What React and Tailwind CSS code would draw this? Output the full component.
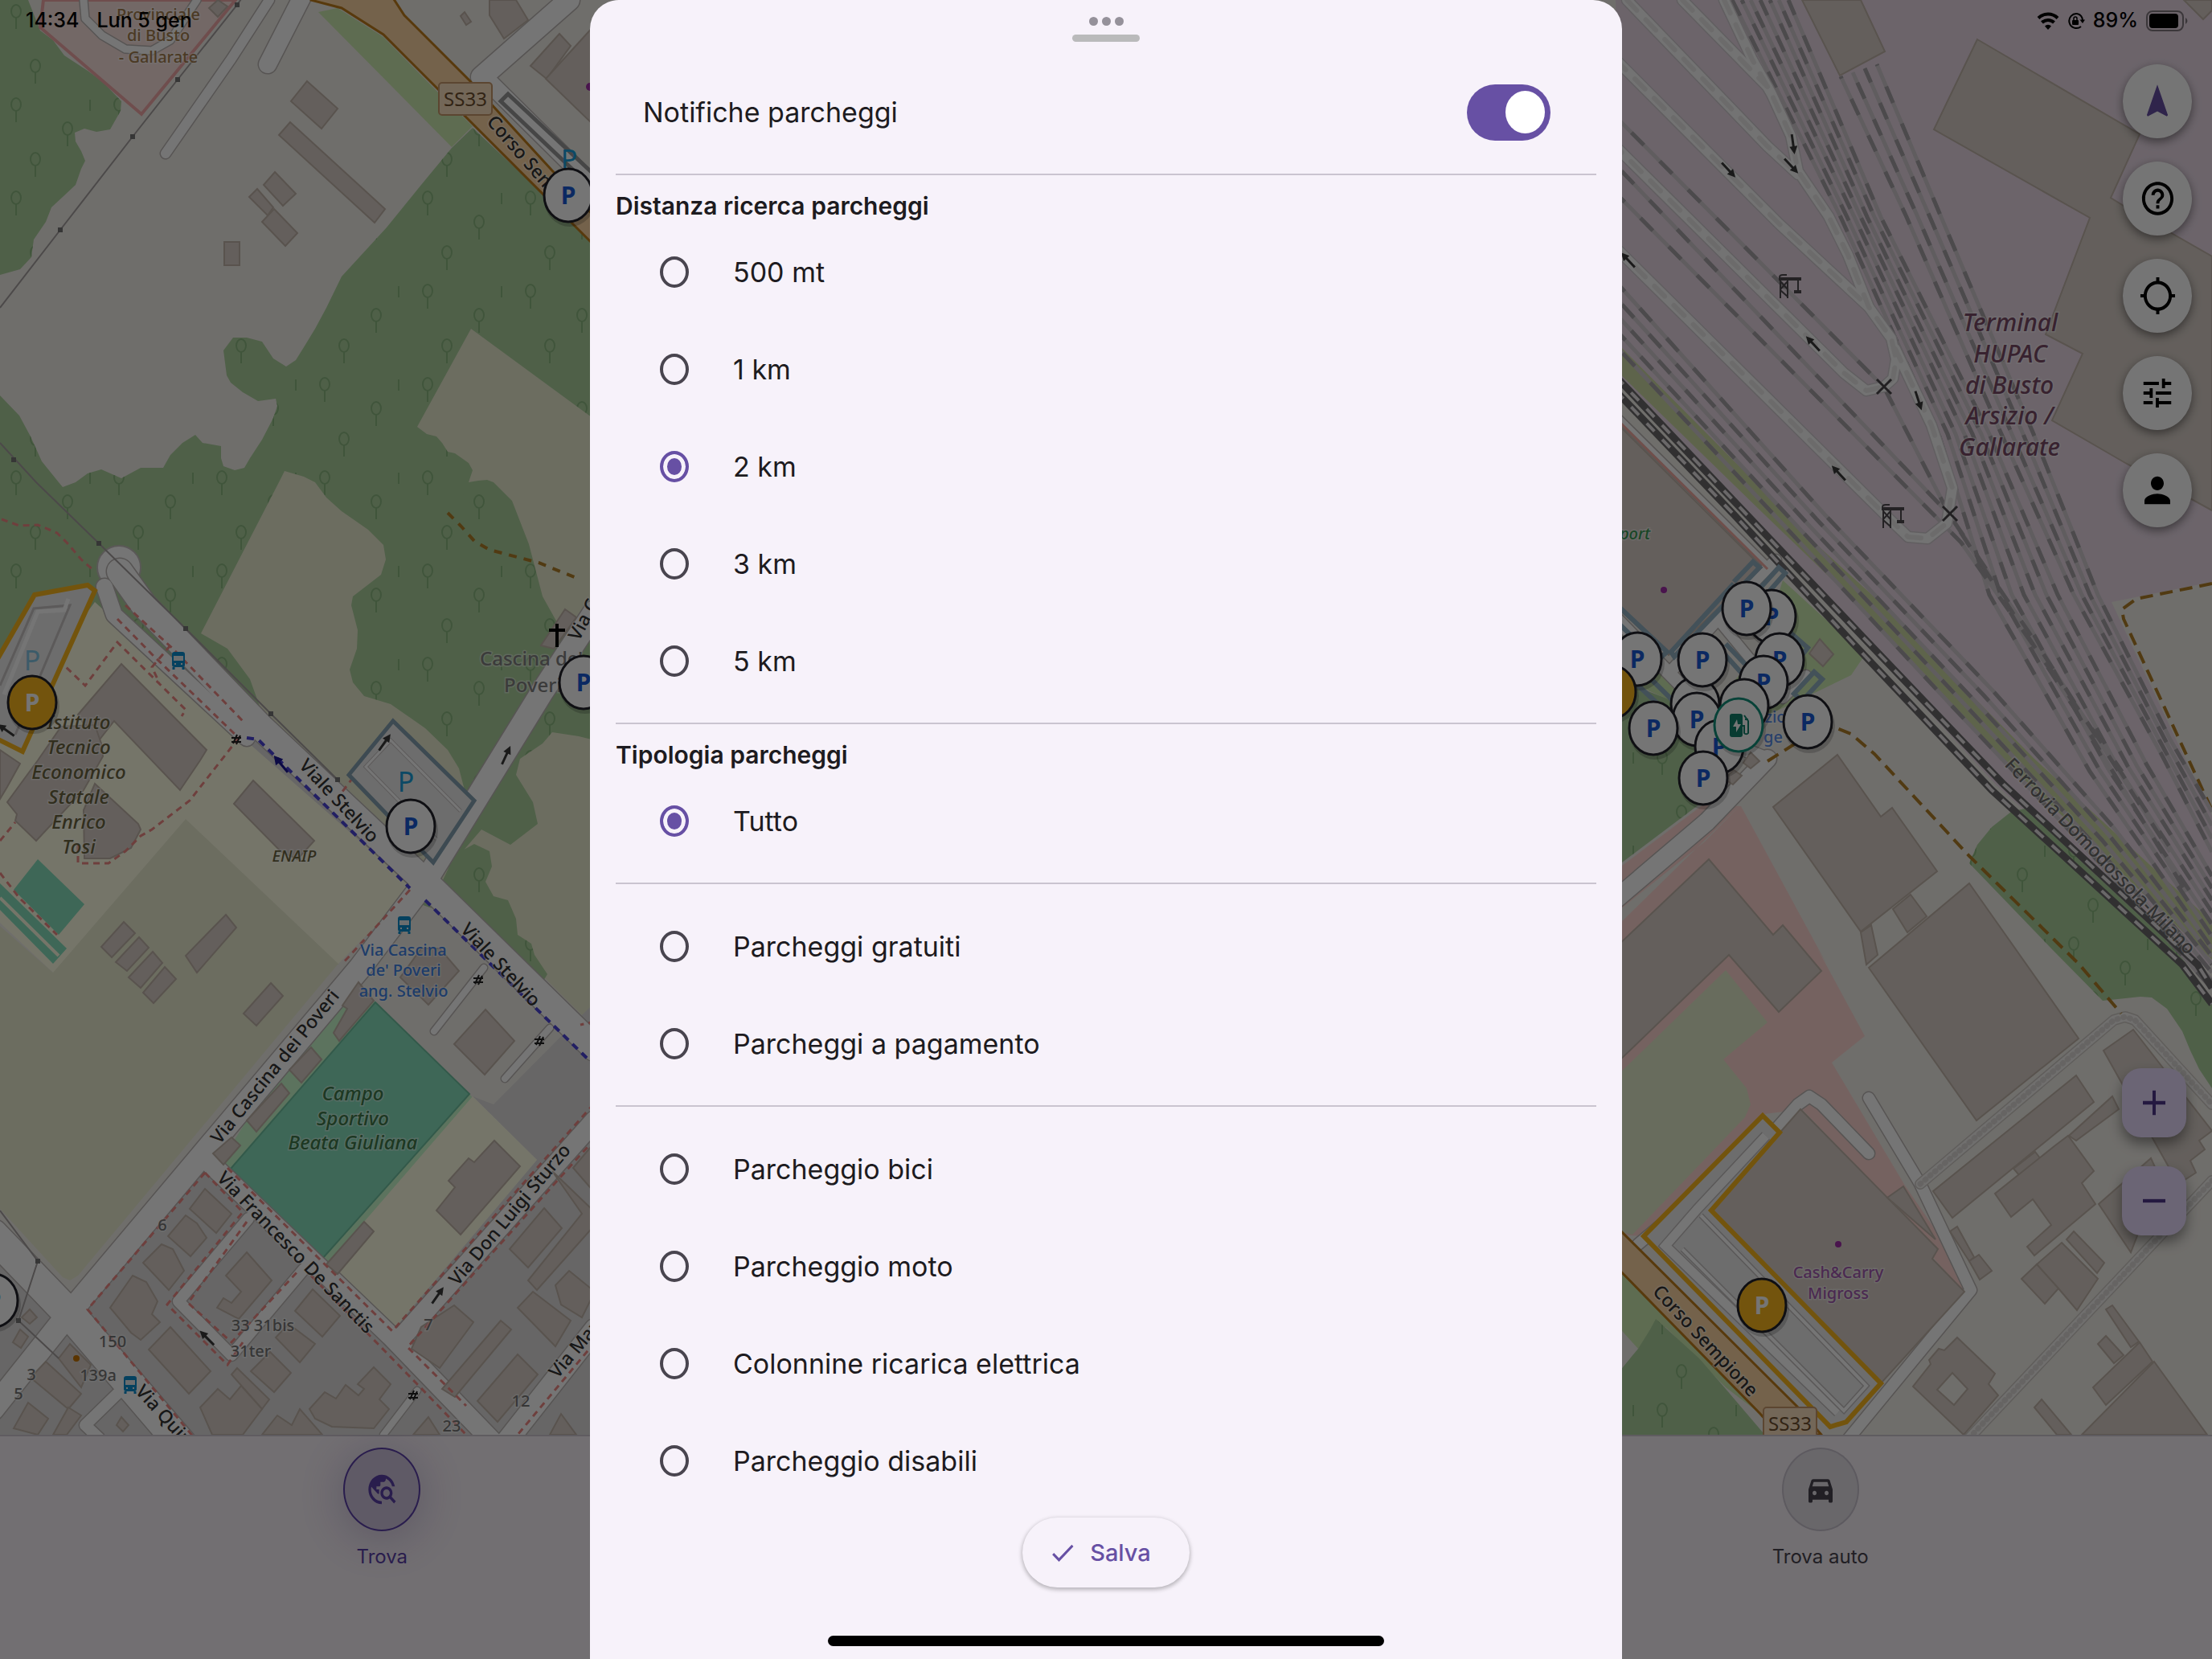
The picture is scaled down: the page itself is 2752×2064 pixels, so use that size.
import React, { useState } from "react";
import {
  MdNavigation,
  MdHelpOutline,
  MdLocationSearching,
  MdTune,
  MdPerson,
  MdAdd,
  MdRemove,
  MdCheck,
  MdTravelExplore,
  MdDirectionsCarFilled,
} from "react-icons/md";

/* ---------- map data: every tile keeps its vertices on its own 1568-unit grid ---------- */

const GRID = 1568;
const TILES = {
  A: [0, 0, 740, 600],
  B: [0, 600, 740, 600],
  C: [0, 1180, 740, 620],
  D: [2010, 0, 742, 680],
  E: [2010, 640, 742, 560],
  F: [2010, 1180, 742, 620],
};

function project(tile, x, y) {
  const [ox, oy, w, h] = TILES[tile];
  return [Math.round(ox + (x * w) / GRID), Math.round(oy + (y * h) / GRID)];
}

/* "A 10,20 30,40 B 5,5" -> projected point list; a letter switches the tile */
function points(src) {
  let tile = "A";
  const out = [];
  for (const token of src.trim().split(/\s+/)) {
    if (TILES[token]) tile = token;
    else {
      const [x, y] = token.split(",").map(Number);
      out.push(project(tile, x, y).join(","));
    }
  }
  return out.join(" ");
}

const LAND = "#f2efe9";
const FOREST = "#add19e";
const FARM = "#ebedd2";
const SCHOOL = "#ffffe5";
const RESIDENTIAL = "#e0dfdf";
const INDUSTRIAL = "#ebdbe8";
const RETAIL = "#ffd6d1";
const GRASS = "#cdebb0";
const PITCH = "#88e0be";

const AREAS = [
  [FOREST, "A 0,0 75,0 105,100 140,130 170,180 230,230 270,265 320,330 318,360 290,420 255,428 222,418 198,432 200,460 215,490 224,522 215,550 200,600 165,640 135,675 120,720 90,780 82,835 52,875 0,893"],
  [GRASS, "A 840,40 890,25 1010,120 1155,300 1245,410 1190,478"],
  [FOREST, "A 1245,415 1190,480 1110,600 1020,740 900,900 860,1000 830,1070 800,1130 780,1170 755,1192 720,1165 690,1110 650,1098 615,1098 588,1140 598,1220 608,1245 640,1275 680,1305 727,1297 730,1320 720,1360 690,1430 660,1490 645,1520 618,1530 590,1515 582,1490 582,1450 535,1440 515,1415 480,1440 450,1480 430,1520 370,1522 320,1555 268,1525 230,1540 200,1568 B 165,15 A 155,1568 110,1500 80,1420 50,1350 0,1285 B 0,900 1568,1568 A 1568,790"],
  [FARM, "A 1242,1070 1100,1388 1125,1412 1150,1420 1165,1440 1180,1468 1200,1475 1235,1505 1246,1530 1235,1568 B 1300,0 1350,60 1395,200 1430,370 1470,460 1568,420 A 1568,1365"],
  [FOREST, "A 1235,1568 1260,1562 1285,1560 B 1300,0 1275,30 1265,75 1245,78 1215,30"],
  [FARM, "B 530,490 735,0 A 750,1532 800,1550 B 830,0 860,50 900,95 970,155 1010,205 1018,250 1005,300 930,370 925,400 942,480 940,540 922,610 930,650 960,695 1030,720 1120,800 1180,870 1210,930 1225,1000 1245,1100 1120,1250 700,780 660,640 600,540"],
  [FARM, "B 1568,840 1525,825 1455,812 1430,850 1370,900 1360,950 1405,1040 1418,1110 1345,1178 1270,1130 1150,1300 1400,1568 C 1568,250 B 1568,1568"],
  [FOREST, "B 1165,1300 1200,1210 1250,1175 1290,1200 1297,1250 1280,1300 1300,1345 1340,1360 1360,1420 1365,1470 1400,1500 C 1410,20 1443,80 1430,105 1400,100 1300,0"],
  [SCHOOL, "B 250,390 1090,1320 890,1568 C 140,75 0,-80 B 0,800"],
  [FARM, "B 490,1095 895,1568 C 890,50 205,1030 185,1045 165,1035 0,820 0,-70 140,75"],
  [RESIDENTIAL, "B 660,780 1120,1310 1100,1330 640,830"],
  [RESIDENTIAL, "C 0,900 185,1110 530,695 608,692 850,975 1035,1205 1415,665 1245,465 1300,490 1568,170 1568,1568 0,1568"],
  ["#c8facc", "C 945,105 990,170 608,692 585,665 650,540 800,310"],
  ["#c8facc", "C 1237,458 1250,475 890,1025 850,975"],
  [SCHOOL, "C 1245,465 1415,665 1035,1205 890,1025 960,860"],
  [INDUSTRIAL, "D 0,0 1568,0 E 1568,235 1303,305 1568,1050 1568,1568 1520,1568 1000,940 650,440 335,0 D 16,1100"],
  ["#cdd9a4", "D 0,980 535,1568 E 700,310 1100,850 1568,1420 1568,1550 1040,880 620,290 390,0 D 0,1060"],
  [GRASS, "E 440,230 655,490 620,560 540,610 400,700 200,650 16,400 16,570 230,700 380,480"],
  [FOREST, "E 0,570 150,650 260,880 230,1000 0,1230"],
  [RETAIL, "E 0,1240 230,1010 330,1015 555,1568 F 530,0 655,275 568,360 760,745 850,900 918,1080 840,980 715,785 490,505 390,520 75,905 0,900"],
  [LAND, "E 235,1140 330,1010 0,1440 0,1390"],
  [FOREST, "E 1075,1025 F 1470,0 1568,160 1568,440 1535,380 1510,320 1490,260 1450,190 1410,155 1380,152 1280,165 1145,0 E 930,1215 950,1150 990,1090 1040,1035"],
  ["#e3ebca", "F 290,68 400,232 283,348 345,440 355,490 340,530 45,900 0,890 0,405"],
  [GRASS, "F 0,1000 380,1465 290,1380 130,1190 60,1260 0,1180"],
  [FOREST, "F 105,1165 220,1290 290,1385 400,1540 0,1540 0,1345 60,1260 90,1200"],
];

const BUILDINGS = [
  "A 810,263 890,352 848,418 768,328",
  "A 765,397 1015,680 987,723 735,440",
  "A 725,560 780,630 745,670 694,600",
  "A 677,613 720,675 705,700 656,640",
  "A 722,680 783,757 752,800 690,720",
  "A 591,787 631,787 631,863 591,863",
  "A 1475,110 1505,150 1440,255 1398,213",
  "A 1568,80 1438,255 1568,410",
  "A 1290,0 1360,0 1393,65 1328,125 1290,50",
  "A 1225,38 1242,70 1230,80 1214,52",
  "A 575,0 600,20 575,55 550,25",
  "B 205,755 320,590 545,870 528,905 475,1000 300,775 255,850",
  "B 160,795 250,790 268,850 272,890 220,1000 95,1165 40,1100 45,1080 20,1040 100,905",
  "B 220,1065 250,980 365,1110 370,1130 345,1190 290,1222 222,1222",
  "B 668,970 828,1165 785,1225 740,1200 617,1045",
  "B 0,870 52,915 20,990 0,1030",
  "B 327,1430 355,1465 295,1545 268,1510",
  "B 367,1480 392,1512 335,1590 305,1560",
  "B 595,1407 623,1447 520,1595 490,1540",
  "B 1490,412 1520,440 1460,540 1425,530",
  "C 403,10 428,45 370,123 340,90",
  "C 435,57 465,95 405,172 377,138",
  "C 715,110 745,150 675,243 642,205",
  "C 1110,0 1160,0 1210,70 1130,178 1055,90",
  "C 1280,192 1357,290 1277,397 1198,300",
  "C 945,105 985,165 895,290 880,265 915,190 903,180",
  "C 820,310 848,348 795,422 762,382",
  "C 742,425 762,455 675,577 650,540",
  "C 610,595 633,620 590,680 562,645",
  "C 1303,605 1370,685 1215,900 1150,825 1200,750 1183,730 1235,660 1250,672",
  "C 960,860 985,890 890,1025 860,995",
  "C 540,755 610,835 570,895 500,820",
  "C 490,840 520,865 545,910 503,968 443,905",
  "C 425,930 455,945 485,1015 445,1075 377,990",
  "C 350,1030 385,1050 415,1110 400,1150 422,1175 370,1232 345,1210 290,1130",
  "C 450,1192 555,1330 497,1402 393,1262",
  "C 650,955 717,1045 630,1165 572,1130 590,1100 610,1115 635,1080 595,1030",
  "C 825,1072 897,1155 850,1222 778,1140",
  "C 760,1180 830,1245 790,1303 727,1225",
  "C 712,1270 768,1335 722,1397 662,1330",
  "C 625,1320 710,1420 690,1450 610,1340",
  "C 575,1385 605,1420 635,1375 690,1450 640,1530 560,1530 528,1445",
  "C 730,1470 770,1500 790,1450 850,1530 690,1530",
  "C 815,1450 855,1395 885,1415 912,1372 945,1405 960,1385 943,1370 985,1318 1030,1370 1000,1420 1025,1450 985,1510 875,1505 830,1480",
  "C 120,1300 213,1400 180,1450 80,1350",
  "C 185,1245 240,1310 215,1380 155,1290",
  "C 75,1430 128,1480 100,1530 35,1510",
  "C 180,1445 213,1470 175,1530 140,1530",
  "C 78,1135 98,1160 78,1182 58,1160",
  "C 52,1198 75,1222 55,1258 33,1238",
  "C 320,1475 340,1500 325,1520 308,1500",
  "C 1435,818 1482,880 1393,1005 1343,945",
  "C 1455,700 1568,830 1568,870 1415,1075 1393,1045 1535,835",
  "C 1568,610 1510,690 1568,770",
  "C 1500,1013 1568,1080 1535,1160 1480,1120 1465,1060",
  "C 1405,1080 1505,1170 1465,1253 1365,1130",
  "C 1198,1122 1247,1175 1160,1320 1085,1260 1110,1190",
  "C 1320,1170 1348,1200 1200,1410 1165,1385",
  "C 1365,1277 1418,1340 1312,1490 1258,1425",
  "C 1130,1475 1160,1530 1090,1530",
  "C 1480,1465 1520,1530 1450,1530",
  "D 490,0 645,0 707,147 590,217",
  "D 950,112 1378,385 1302,568 1335,590 1568,735 1568,1465 1345,1330 1148,1205 1228,1015 1130,960 1247,625 837,372",
  "D 1495,0 1568,0 1568,30 1545,55",
  "D 0,1210 330,1568 E 385,185 140,490 0,320",
  "E 583,838 697,1053 727,1022 845,1243 645,1453 415,1018",
  "E 775,1325 818,1400 768,1455 730,1375",
  "E 645,1455 672,1430 688,1535 660,1568",
  "E 930,1285 F 1217,282 948,542 665,60",
  "E 537,435 573,487 545,530 510,485",
  "E 355,830 378,860 355,885 335,865",
  "E 310,890 332,910 308,940 285,920",
  "E 0,1510 245,1200 415,1465 440,1432 F 540,72 428,200 298,20 0,365",
  "F 485,505 847,945 833,975 918,1080 697,1368 252,825",
  "F 757,748 840,915 715,785",
  "F 1210,400 1257,482 885,848 835,765",
  "F 1307,465 1322,505 1210,605 1192,590",
  "F 1103,640 1118,662 1062,715 1047,693",
  "F 1155,620 1190,590 1257,700 1225,738 1262,805 1100,965 1083,938 1145,870 1097,790 1040,845 998,772",
  "F 1270,805 1408,660 1430,720 1355,955",
  "F 1360,255 1568,575 1535,605 1548,632 1510,668 1525,705 1480,740 1282,320",
  "F 898,875 942,970 930,985 880,890",
  "F 955,963 988,1015 957,1042 930,985",
  "F 1205,890 1285,990 1265,1022 1185,915",
  "F 1172,925 1268,1040 1212,1138 1165,1070 1108,995",
  "F 1108,993 1165,1070 1128,1118 1068,1040",
  "F 898,1225 998,1338 980,1370 1005,1405 915,1530 782,1378 828,1308 825,1295 850,1260 865,1265",
  "F 1305,1122 1375,1237 1355,1255 1290,1135",
  "F 1290,1218 1335,1280 1310,1305 1268,1245",
  "F 1378,1238 1412,1300 1290,1437 1255,1380",
  "F 1415,1300 1555,1530 1225,1530",
  "F 1120,1420 1198,1530 1160,1530 1100,1445",
];

/* [width, path] */
const ROADS = [
  [9, "A 220,0 225,60 270,115 330,160 400,165 450,130 520,0"],
  [12, "A 710,0 610,190 437,500"],
  [22, "A 800,-20 705,210"],
  [26, "A 1500,0 1270,250"],
  [22, "A 1290,270 1568,610"],
  [32, "B 315,290 380,400 690,800 1120,1300 1568,1840"],
  [20, "B 275,340 300,430 650,830"],
  [28, "B 1568,420 1430,680 1120,1300 C 950,60 540,640 180,1150 -20,1450"],
  [24, "C 540,660 1030,1220 1330,1590"],
  [24, "C 1050,1235 1568,540"],
  [38, "C -20,900 200,1170 500,1590"],
  [26, "C 1310,1590 1568,1200"],
  [14, "C 655,850 470,1110 610,1280 800,1010"],
  [14, "C 310,1400 225,1500 260,1540"],
  [8, "C 1275,60 1145,260"],
  [8, "C 1450,250 1330,410"],
  [8, "C 1100,1390 1010,1530"],
  [22, "E 0,1340 240,1070 400,850"],
  [16, "E 0,360 130,540 340,820 400,850"],
  [14, "E 145,545 300,320 420,160"],
  [12, "E 270,370 440,640 500,560"],
  [8, "D 0,1190 E 250,-20 400,180"],
  [14, "F 60,930 F 430,560 480,490 510,465 540,490 665,645"],
  [14, "F 665,470 800,740 935,1075 600,1560"],
];

const SERVICE = [
  "D 30,0 400,420 480,500",
  "D 175,0 400,250",
  "D 0,170 430,640 665,880",
  "D 285,0 360,170 410,270 460,390 480,490 560,620 610,730 665,880 725,970 738,1030 730,1085 706,1110 660,1120 600,1070 0,420",
  "D 0,710 720,1490 770,1540 820,1545 870,1500 885,1400 830,1220 735,1000",
];

const TRACKS = [
  "F 800,740 1310,225 1340,215 1365,225 1568,490",
  "F 930,1540 1568,730",
];

const PINK_PATHS = [
  "B 5,120 50,140 100,138 150,165 180,200 215,250 250,290",
  "B 80,515 165,590 225,660 310,520 490,740 478,760",
  "B 310,445 400,560 630,830",
  "B 330,400 455,540 640,775",
  "B 450,530 400,600 420,650",
  "B 630,830 500,1035 400,1130 370,1150 330,1200 285,1238 205,1238 205,1170",
  "B 0,1165 40,1105",
  "B 0,1270 50,1350 150,1470",
  "B 950,930 900,1010",
  "B 1080,1325 900,1568",
  "C 540,705 230,1135 520,1550",
  "C 540,705 640,830 440,1120 600,1310 640,1240",
  "C 650,860 495,1115 610,1240 790,1010",
  "C 600,690 1035,1205 1568,485",
  "C 1568,600 1075,1255 1230,1440",
  "C 820,1030 1100,1370 1230,1530",
  "C 1568,1240 1365,1530",
  "C 1568,230 1530,240",
];

/* [x, y, kind] in page pixels */
const PINS = [
  [707, 243, "p"],
  [726, 849, "p"],
  [40, 874, "gold"],
  [511, 1028, "p"],
  [-8, 1618, "p"],
  [2204, 767, "p"],
  [2173, 757, "p"],
  [2037, 820, "p"],
  [2214, 821, "p"],
  [2194, 849, "p"],
  [2109, 876, "blank"],
  [2118, 821, "p"],
  [2111, 895, "p"],
  [2005, 861, "gold"],
  [2139, 929, "p"],
  [2170, 878, "blank"],
  [2057, 906, "p"],
  [2163, 902, "ev"],
  [2249, 898, "p"],
  [2119, 968, "p"],
  [2192, 1624, "gold"],
];

function interpolate(left, right, count) {
  return Array.from({ length: count }, (_, i) => {
    const t = i / (count - 1);
    return left
      .map(([x, y], k) => `${Math.round(x + (right[k][0] - x) * t)},${Math.round(y + (right[k][1] - y) * t)}`)
      .join(" ");
  });
}

const RAIL_YARD = [
  ...interpolate(
    [[2155, 0], [2290, 270], [2412, 540], [2475, 740], [2600, 960], [2752, 1180]],
    [[2225, 0], [2340, 270], [2475, 540], [2560, 740], [2670, 950], [2752, 1090]],
    7
  ),
  ...interpolate(
    [[2290, 95], [2372, 270], [2490, 540], [2580, 740], [2690, 940], [2752, 1060]],
    [[2335, 80], [2415, 270], [2530, 540], [2610, 740], [2700, 920], [2752, 1010]],
    4
  ),
  ...interpolate(
    [[2010, 430], [2230, 665], [2430, 880], [2600, 1060], [2752, 1230]],
    [[2010, 350], [2270, 640], [2480, 860], [2630, 1030], [2752, 1190]],
    5
  ),
  "2010,145 2344,482 2425,640 2580,880 2720,1110",
  "2010,205 2425,640 2540,810 2700,1060",
  "2010,240 2440,675 2640,960",
];

/* [text, tile, x, y, size, fill, rotate, italic] - x,y is the middle of the text */
const LABELS = [
  ["Provinciale", "A", 417, 48, 20, "#a57f50", 0],
  ["di Busto", "A", 417, 116, 20, "#a57f50", 0],
  ["- Gallarate", "A", 417, 185, 20, "#a57f50", 0],
  ["Corso Sem", "A", 1375, 500, 23, "#333", 49],
  ["Cascina de'", "B", 1400, 575, 24, "#808080", 0],
  ["Poveri", "B", 1405, 660, 24, "#808080", 0],
  ["Via Ca", "B", 1545, 430, 23, "#333", -62],
  ["Istituto", "B", 207, 782, 24, "#6b6440", 0, true],
  ["Tecnico", "B", 207, 862, 24, "#6b6440", 0, true],
  ["Economico", "B", 207, 943, 24, "#6b6440", 0, true],
  ["Statale", "B", 207, 1024, 24, "#6b6440", 0, true],
  ["Enrico", "B", 207, 1105, 24, "#6b6440", 0, true],
  ["Tosi", "B", 207, 1186, 24, "#6b6440", 0, true],
  ["ENAIP", "B", 775, 1214, 20, "#6b6440", 0, true],
  ["Viale Stelvio", "B", 895, 1035, 23, "#333", 47],
  ["Viale Stelvio", "B", 1320, 1568, 23, "#333", 47],
  ["Via Cascina", "B", 1063, 1520, 20, "#3f83e8", 0],
  ["de' Poveri", "C", 1063, 68, 20, "#3f83e8", 0],
  ["ang. Stelvio", "C", 1063, 135, 20, "#3f83e8", 0],
  ["Via Cascina dei Poveri", "C", 725, 372, 23, "#333", -51],
  ["Via Francesco De Sanctis", "C", 780, 955, 23, "#333", 46],
  ["Via Don Luigi Sturzo", "C", 1343, 838, 23, "#333", -50],
  ["Via Quintino", "C", 465, 1510, 23, "#333", 48],
  ["Via Mazzini", "C", 1540, 1225, 23, "#333", -50],
  ["Campo", "C", 930, 457, 24, "#3f7a4a", 0, true],
  ["Sportivo", "C", 930, 535, 24, "#3f7a4a", 0, true],
  ["Beata Giuliana", "C", 930, 612, 24, "#3f7a4a", 0, true],
  ["6", "C", 428, 870, 20, "#777", 0],
  ["150", "C", 297, 1237, 20, "#777", 0],
  ["139a", "C", 258, 1343, 20, "#777", 0],
  ["3", "C", 82, 1340, 20, "#777", 0],
  ["5", "C", 48, 1400, 20, "#777", 0],
  ["33 31bis", "C", 692, 1187, 20, "#777", 0],
  ["31ter", "C", 662, 1268, 20, "#777", 0],
  ["7", "C", 1130, 1183, 20, "#777", 0],
  ["12", "C", 1373, 1425, 20, "#777", 0],
  ["23", "C", 1190, 1503, 20, "#777", 0],
  ["Terminal", "D", 1038, 925, 30, "#7a4a68", 0, true],
  ["HUPAC", "D", 1038, 1014, 30, "#7a4a68", 0, true],
  ["di Busto", "D", 1035, 1104, 30, "#7a4a68", 0, true],
  ["Arsizio /", "D", 1035, 1193, 30, "#7a4a68", 0, true],
  ["Gallarate", "D", 1035, 1283, 30, "#7a4a68", 0, true],
  ["port", "E", 50, 66, 20, "#3a9a55", 0, true],
  ["zio", "E", 420, 705, 20, "#5b8de8", 0],
  ["ge", "E", 415, 775, 20, "#5b8de8", 0],
  ["Ferrovia Domodossola-Milano", "E", 1275, 1190, 23, "#6b6b6b", 46],
  ["Cash&Carry", "F", 586, 1020, 20, "#a35bb0", 0],
  ["Migross", "F", 586, 1086, 20, "#a35bb0", 0],
  ["Corso Sempione", "F", 237, 1235, 23, "#333", 47],
];

const ARROWS = [
  ["B", 1015, 845, -55], ["B", 1335, 885, -65], ["B", 15, 805, 215],
  ["C", 1155, 1090, -55], ["C", 545, 1225, 225],
  ["D", 468, 415, 82], ["D", 462, 478, 47], ["D", 297, 488, 47], ["D", 517, 985, 227],
  ["D", 585, 1355, 227], ["D", 32, 745, 227], ["D", 797, 1150, 72],
];

const GATES = [["B", 623, 836], ["C", 1260, 98], ["C", 1422, 290], ["C", 1090, 1406]];
const STOPS = [["B", 470, 578], ["B", 1066, 1438], ["C", 343, 1370]];
const POLES = ["A 625,15", "A 468,258", "A 350,443", "A 158,748", "A 36,1495", "B 260,198", "B 490,476", "B 715,752", "B 890,967", "C 100,985", "C 48,1170"];

function Pin({ x, y, kind }) {
  const fill = kind === "gold" ? "#fbb81e" : "#ffffff";
  const stroke = kind === "ev" ? "#12907a" : "#22222a";
  return (
    <g transform={`translate(${x} ${y})`}>
      <ellipse rx="32" ry="34" cx="2" cy="5" fill="#000" opacity=".18" />
      <ellipse rx="30" ry="33" fill={fill} stroke={stroke} strokeWidth="3" />
      {kind === "ev" && (
        <g fill="none" stroke="#12806c" strokeWidth="2">
          <rect x="-10" y="-13" width="14" height="27" rx="2" fill="#12806c" />
          <path d="M-2 -7 -7 2h4v7l6-10h-4z" fill="#fff" stroke="none" />
          <path d="M4 1h3v9a3 3 0 0 0 5 0V-5l-5-7M8 -7h4" />
        </g>
      )}
      {(kind === "p" || kind === "gold") && (
        <text
          textAnchor="middle"
          y="11"
          fontFamily="Noto Sans, sans-serif"
          fontSize="30"
          fontWeight="700"
          fill={kind === "gold" ? "#ffffff" : "#1a5ad6"}
        >
          P
        </text>
      )}
    </g>
  );
}

function RoadShield({ x, y }) {
  return (
    <g transform={`translate(${x} ${y})`}>
      <rect x="-33" y="-20" width="66" height="40" rx="4" fill="#fbe0c0" stroke="#c99a6b" strokeWidth="2" />
      <text textAnchor="middle" y="9" fontFamily="Noto Sans, sans-serif" fontSize="24" fill="#6e4f2f">
        SS33
      </text>
    </g>
  );
}

function CityMap() {
  return (
    <svg
      className="absolute inset-0 h-full w-full"
      viewBox="0 0 2752 1785"
      preserveAspectRatio="xMidYMid slice"
      role="img"
      aria-label="Mappa"
    >
      <defs>
        <pattern id="trees" width="128" height="116" patternUnits="userSpaceOnUse">
          <g fill="none" stroke="#8db982" strokeWidth="2">
            <path d="M20 22v14M84 52v14M44 90v14M112 8v14" />
            <ellipse cx="20" cy="14" rx="6" ry="8" />
            <ellipse cx="84" cy="44" rx="6" ry="8" />
            <ellipse cx="44" cy="82" rx="6" ry="8" />
          </g>
        </pattern>
      </defs>
      <rect width="2752" height="1785" fill={LAND} />
      {AREAS.map(([fill, d], i) => (
        <g key={i}>
          <polygon points={points(d)} fill={fill} />
          {fill === FOREST && <polygon points={points(d)} fill="url(#trees)" />}
        </g>
      ))}
      <polygon points={points("A 115,0 105,90 372,372 620,0")} fill="#fbe3df" stroke="#f2a9a9" strokeWidth="4" />
      <polygon points={points("C 990,170 1237,458 850,975 608,692")} fill={PITCH} stroke="#6fc3a2" strokeWidth="2" />
      <polygon points={points("B 100,1225 222,1373 155,1472 35,1325")} fill={PITCH} />
      <polygon points={points("B 0,1305 175,1515 140,1565 0,1390")} fill={PITCH} />
      <polyline points={points("B 0,1350 155,1540")} fill="none" stroke={SCHOOL} strokeWidth="4" />

      <g fill="none" strokeLinecap="round" strokeLinejoin="round">
        <circle cx="148" cy="706" r="27" fill="#fff" stroke="#c5c0bd" strokeWidth="2" />
        {ROADS.map(([w, d], i) => (
          <polyline key={i} points={points(d)} stroke="#bdb8b6" strokeWidth={w + 3} />
        ))}
        {ROADS.map(([w, d], i) => (
          <polyline key={i} points={points(d)} stroke="#ffffff" strokeWidth={w} />
        ))}
        {TRACKS.map((d, i) => (
          <g key={i}>
            <polyline points={points(d)} stroke="#d0cbc6" strokeWidth="14" />
            <polyline points={points(d)} stroke="#f4f2f0" strokeWidth="11" />
            <polyline points={points(d)} stroke="#dedbd8" strokeWidth="7" strokeDasharray="1 7" />
          </g>
        ))}
      </g>

      <polygon points={points("A 820,0 900,25 1010,112 1155,290 1568,800 1568,705 1240,265 1065,50 1035,-10 820,-10")} fill="#fcd6a4" stroke="#bf7d1c" strokeWidth="3" />
      <polygon points={points("F -20,850 480,1445 540,1530 430,1530 380,1465 -20,975")} fill="#fcd6a4" stroke="#bf7d1c" strokeWidth="3" />

      <g fill="#d9d0c9" stroke="#c2b5aa" strokeWidth="2">
        {BUILDINGS.map((d, i) => (
          <polygon key={i} points={points(d)} />
        ))}
        <polygon points={points("F 885,1335 925,1385 890,1437 845,1388")} fill={LAND} />
      </g>

      <g fill="none" stroke="#f08a86" strokeWidth="3" strokeDasharray="8 6">
        {PINK_PATHS.map((d, i) => (
          <polyline key={i} points={points(d)} />
        ))}
      </g>
      <polyline points={points("E 0,-10 D 0,1200 340,1568 E 400,190")} fill="none" stroke="#f3aca3" strokeWidth="3" />
      <g fill="none" stroke="#4a44d8" strokeWidth="4" strokeDasharray="9 7">
        <polyline points={points("B 650,830 680,835 1080,1320")} />
        <polyline points={points("B 1120,1360 1300,1575 C 1568,370")} />
      </g>
      <g fill="none" stroke="#b07f28" strokeWidth="4" strokeDasharray="16 9">
        <polyline points={points("B 1180,100 1215,140 1250,190 1290,220 1370,245 1420,262 1530,315")} strokeDasharray="10 9" />
        <polyline points={points("E 1568,240 1370,295 1332,330 1335,365 1568,1030")} />
        <polyline points={points("E 400,860 470,800 570,740 620,765 680,835 930,1190 1220,1568 F 1330,205")} />
      </g>

      {/* rail yard, service roads and main line */}
      <g fill="none" stroke="#d2cad0" strokeWidth="5">
        {RAIL_YARD.map((p, i) => (
          <polyline key={i} points={p} />
        ))}
      </g>
      <g fill="none" stroke="#a5a1a5" strokeWidth="5" strokeDasharray="22 28">
        {RAIL_YARD.map((p, i) => (
          <polyline key={i} points={p} strokeDashoffset={i * 17} />
        ))}
      </g>
      <g fill="none" strokeLinecap="round" strokeLinejoin="round">
        {SERVICE.map((d, i) => (
          <polyline key={i} points={points(d)} stroke="#d3cdd2" strokeWidth="15" />
        ))}
        {SERVICE.map((d, i) => (
          <polyline key={i} points={points(d)} stroke="#fafafa" strokeWidth="12" />
        ))}
        {SERVICE.map((d, i) => (
          <polyline key={i} points={points(d)} stroke="#ebeaea" strokeWidth="6" strokeDasharray="18 16" />
        ))}
      </g>
      {["D 0,1080 E 345,0 660,440 1020,940 1530,1568 F 1568,125", "D 0,1120 E 310,0 625,450 990,960 1490,1568 F 1568,175"].map((d) => (
        <g key={d} fill="none">
          <polyline points={points(d)} stroke="#6b696b" strokeWidth="9" />
          <polyline points={points(d)} stroke="#e6e2e4" strokeWidth="4" strokeDasharray="14 14" />
        </g>
      ))}

      <g fill="none" stroke="#a5a0a0" strokeWidth="2">
        <polyline points={points("A 640,-10 625,15 468,258 350,443 158,748 0,1000")} />
        <polyline points={points("A 0,1440 B 95,0 260,198 490,476 715,752 890,967")} />
        <polyline points={points("C 0,825 100,985 48,1170 155,1290")} />
      </g>
      {POLES.map((p) => {
        const [cx, cy] = points(p).split(",");
        return <rect key={p} x={cx - 3} y={cy - 3} width="6" height="6" fill="#777" />;
      })}

      {/* parking lots */}
      <g strokeLinejoin="miter">
        <polygon points={points("B 92,365 232,335 250,352 60,875 -30,820 -20,600")} fill="#eeeeee" stroke="#fbb81e" strokeWidth="6" />
        <polyline points={points("B 0,660 90,410 185,400 40,820")} fill="none" stroke="#c9c4c4" strokeWidth="3" />
        <polyline points={points("B 10,690 100,420 170,415 180,380")} fill="none" stroke="#fff" strokeWidth="5" />
        <polygon points={points("B 1037,775 1250,1035 1142,1235 920,952")} fill="#eeeeee" stroke="#85a2b2" strokeWidth="5" />
        <polyline points={points("B 1215,1070 1030,840 965,925 1150,1160")} fill="none" stroke="#c9c4c4" strokeWidth="5" />
        <polyline points={points("B 1215,1070 1030,840 965,925 1150,1160")} fill="none" stroke="#fff" strokeWidth="3" />
        <polygon points={points("F 387,525 432,578 252,825 697,1368 607,1490 565,1505 75,905")} fill="#eeeeee" stroke="#fbb81e" strokeWidth="6" />
        <g fill="none" stroke="#c4c0c0" strokeWidth="14">
          <polyline points={points("F 395,590 215,820 130,935 585,1460")} />
        </g>
        <g fill="none" stroke="#fff" strokeWidth="11">
          <polyline points={points("F 395,590 215,820 130,935 585,1460")} />
        </g>
        <g fill="none" stroke="#c4c0c0" strokeWidth="7">
          <polyline points={points("F 225,840 660,1375 600,1455 175,945")} />
        </g>
        <g fill="none" stroke="#fff" strokeWidth="4">
          <polyline points={points("F 225,840 660,1375 600,1455 175,945")} />
        </g>
        <polyline points={points("A 1568,570 1340,305 1320,330 1568,620")} fill="none" stroke="#9a9a9a" strokeWidth="5" />
        <g fill="none" stroke="#93b0c2" strokeWidth="6">
          <polyline points={points("E 0,310 135,480 110,510 0,370")} />
          <polyline points={points("E 310,235 362,165 378,185 155,495 145,480 310,240")} />
          <polyline points={points("E 350,300 430,185 445,205 370,320")} />
          <polyline points={points("E 290,450 410,620 390,640 280,480")} />
          <polyline points={points("E 440,390 505,465 490,490")} />
          <polyline points={points("E 30,560 170,730 190,700 60,530")} />
          <polygon points={points("E 523,550 543,575 490,650 470,625")} />
        </g>
      </g>
      {[["B", 85, 580, 0.5], ["B", 1070, 975, 1], ["A", 1500, 520, 1]].map(([t, x, y, o]) => {
        const [px, py] = project(t, x, y);
        return (
          <text key={px} x={px} y={py + 12} textAnchor="middle" fontFamily="Noto Sans, sans-serif" fontSize="34" fill="#1ba0dc" opacity={o}>
            P
          </text>
        );
      })}

      {ARROWS.map(([t, x, y, r]) => {
        const [px, py] = project(t, x, y);
        return (
          <path key={`${px}-${py}`} transform={`translate(${px} ${py}) rotate(${r})`} d="M-13 -1.5H2V-5L12 0 2 5V1.5H-13z" fill="#3a3a3a" />
        );
      })}
      <path transform={`translate(${project("B", 740, 915).join(" ")}) rotate(230)`} d="M-14 -1.5H2V-6L13 0 2 6V1.5H-14z" fill="#1b1696" />
      {GATES.map(([t, x, y]) => {
        const [px, py] = project(t, x, y);
        return <path key={px} transform={`translate(${px} ${py})`} d="M-6 -2H6M-6 3H6M-4 5 1 -6M0 6 5 -5" stroke="#222" strokeWidth="2" />;
      })}
      {STOPS.map(([t, x, y]) => {
        const [px, py] = project(t, x, y);
        return (
          <g key={px} transform={`translate(${px} ${py})`}>
            <rect x="-8" y="-10" width="16" height="19" rx="3" fill="#0d8fd0" />
            <rect x="-6" y="-5" width="12" height="6" fill="#e9eef0" />
            <path d="M-6 9v3M6 9v3" stroke="#0d8fd0" strokeWidth="3" />
            <path d="M-5 5h2M3 5h2" stroke="#e9eef0" strokeWidth="2" />
          </g>
        );
      })}
      <path transform={`translate(${project("B", 1469, 492).join(" ")})`} d="M0 -12V17M-10 -4H10" stroke="#000" strokeWidth="4" />
      {[["D", 706, 1110], ["D", 880, 1474]].map(([t, x, y]) => {
        const [px, py] = project(t, x, y);
        return <path key={px} transform={`translate(${px} ${py})`} d="M-9 -9 9 9M9 -9-9 9" stroke="#4a464a" strokeWidth="3" />;
      })}
      {[["D", 458, 822], ["D", 730, 1480]].map(([t, x, y]) => {
        const [px, py] = project(t, x, y);
        return (
          <g key={px} transform={`translate(${px} ${py})`} fill="none" stroke="#4f4a50">
            <path d="M-14 -9H14" strokeWidth="4" />
            <path d="M5 7H14" strokeWidth="4" />
            <path d="M-13 -11q0 -3 4 -3h5M-12 -9V15M-3 -9V15M-12 -6-3 4M-12 5-3 13M-3 -6-12 4M10 -8V7" strokeWidth="2" />
          </g>
        );
      })}
      <circle cx={project("E", 126, 263)[0]} cy={project("E", 126, 263)[1]} r="4" fill="#a02ca8" />
      <circle cx={project("F", 586, 930)[0]} cy={project("F", 586, 930)[1]} r="4" fill="#a02ca8" />
      <circle cx={project("A", 1555, 282)[0]} cy={project("A", 1555, 282)[1]} r="5" fill="#a02ca8" />
      <circle cx={project("C", 202, 1291)[0]} cy={project("C", 202, 1291)[1]} r="4" fill="#c77400" />

      {LABELS.map(([text, tile, x, y, size, fill, rotate, italic]) => {
        const [px, py] = project(tile, x, y);
        return (
          <text
            key={`${text}-${px}-${py}`}
            transform={`translate(${px} ${py}) rotate(${rotate})`}
            y={Math.round(size * 0.35)}
            textAnchor="middle"
            fontFamily="Noto Sans, sans-serif"
            fontSize={size}
            fontStyle={italic ? "italic" : "normal"}
            fontWeight="500"
            fill={fill}
            stroke="#ffffff"
            strokeOpacity=".45"
            strokeWidth="3"
            paintOrder="stroke"
          >
            {text}
          </text>
        );
      })}
      <RoadShield x={579} y={123} />
      <RoadShield x={2227} y={1771} />
      {PINS.map(([x, y, kind], i) => (
        <Pin key={i} x={x} y={y} kind={kind} />
      ))}
    </svg>
  );
}

/* ---------- controls over the map ---------- */

function RoundButton({ label, children }) {
  return (
    <button
      type="button"
      aria-label={label}
      className="flex h-[92px] w-[86px] items-center justify-center rounded-[50%] bg-white text-black shadow-[0_4px_12px_rgba(0,0,0,0.45)]"
    >
      {children}
    </button>
  );
}

function ZoomButton({ label, children }) {
  return (
    <button
      type="button"
      aria-label={label}
      className="flex h-[86px] w-20 items-center justify-center rounded-3xl bg-[#eaddff] text-[#4f378b] shadow-[0_8px_16px_rgba(0,0,0,0.4)]"
    >
      {children}
    </button>
  );
}

function MapControls() {
  return (
    <>
      <div className="absolute top-20 right-[25px] flex flex-col gap-[29px]">
        <RoundButton label="Orientamento">
          <MdNavigation className="h-[50px] w-[42px] text-[#6750a4]" preserveAspectRatio="none" />
        </RoundButton>
        <RoundButton label="Aiuto">
          <MdHelpOutline className="h-[50px] w-[47px]" preserveAspectRatio="none" />
        </RoundButton>
        <RoundButton label="Posizione">
          <MdLocationSearching className="h-[50px] w-[47px]" preserveAspectRatio="none" />
        </RoundButton>
        <RoundButton label="Filtri">
          <MdTune className="h-[48px] w-[46px]" preserveAspectRatio="none" />
        </RoundButton>
        <RoundButton label="Profilo">
          <MdPerson className="h-[52px] w-[48px]" preserveAspectRatio="none" />
        </RoundButton>
      </div>
      <div className="absolute right-8 bottom-[248px] flex flex-col gap-9">
        <ZoomButton label="Ingrandisci">
          <MdAdd className="h-[52px] w-[48px]" preserveAspectRatio="none" />
        </ZoomButton>
        <ZoomButton label="Riduci">
          <MdRemove className="h-[52px] w-[48px]" preserveAspectRatio="none" />
        </ZoomButton>
      </div>
    </>
  );
}

function BottomNav() {
  return (
    <nav className="grid h-[279px] grid-cols-3 items-start border-t-2 border-[#cfc9d2] bg-[#f9f2f9] pt-3.5 pr-10 pl-7">
      <a href="#trova" className="flex flex-col items-center gap-[18px] text-[#5b3fa8]">
        <span className="flex h-[104px] w-24 items-center justify-center rounded-[50%] border-2 border-[#5b3fa8] bg-[#d0c4de] shadow-[0_8px_60px_rgba(79,55,139,0.3)]">
          <MdTravelExplore className="h-[44px] w-10" preserveAspectRatio="none" />
        </span>
        <span className="text-2xl leading-7">Trova</span>
      </a>
      <a href="#trova-auto" className="col-start-3 flex flex-col items-center gap-[18px] text-[#49454f]">
        <span className="flex h-[104px] w-24 items-center justify-center rounded-[50%] border-2 border-[#cac4d0] bg-[#e4e0e8]">
          <MdDirectionsCarFilled className="h-[44px] w-10" preserveAspectRatio="none" />
        </span>
        <span className="text-2xl leading-7">Trova auto</span>
      </a>
    </nav>
  );
}

/* ---------- status bar ---------- */

function StatusBar() {
  return (
    <header className="absolute inset-x-0 top-0 flex h-[52px] items-center justify-between pr-[30px] pl-8 text-[25px] font-medium text-black">
      <div className="flex gap-[22px]">
        <span>14:34</span>
        <span>Lun 5 gen</span>
      </div>
      <div className="flex items-center gap-2.5">
        <svg viewBox="0 0 28 22" className="h-[22px] w-7" fill="none" stroke="#000" strokeWidth="4" aria-hidden="true">
          <path d="M2 7.500a17 17 0 0 1 24 0" />
          <path d="M6.500 13a10.600 10.600 0 0 1 15 0" />
          <path d="M10 17.500a5.600 5.600 0 0 1 8 0L14 22z" fill="#000" stroke="none" />
        </svg>
        <svg viewBox="0 0 22 22" className="h-[22px] w-[22px]" fill="none" stroke="#000" strokeWidth="2" aria-hidden="true">
          <path d="M17 18A9 9 0 1 1 13 2.200" />
          <path d="M15.500 9.500h6.500l-3 4.500z" fill="#000" stroke="none" />
          <path d="M19 10A9 9 0 0 0 13 2.200" />
          <rect x="6" y="10" width="8" height="6" rx="1" fill="#000" stroke="none" />
          <path d="M8 10V8a2 2 0 0 1 4 0v2" strokeWidth="1.500" />
        </svg>
        <span>89%</span>
        <svg viewBox="0 0 52 26" className="h-[26px] w-[52px]" aria-hidden="true">
          <rect x="1" y="1" width="45" height="24" rx="7" fill="none" stroke="#000" strokeOpacity=".45" strokeWidth="2" />
          <rect x="4" y="4" width="36" height="18" rx="4" fill="#000" />
          <path d="M49 9v8a4.500 4.500 0 0 0 0-8z" fillOpacity=".45" />
        </svg>
      </div>
    </header>
  );
}

/* ---------- settings sheet ---------- */

const DISTANCES = ["500 mt", "1 km", "2 km", "3 km", "5 km"];
const TYPES = [
  ["Tutto"],
  ["Parcheggi gratuiti", "Parcheggi a pagamento"],
  ["Parcheggio bici", "Parcheggio moto", "Colonnine ricarica elettrica", "Parcheggio disabili"],
];

function Divider() {
  return <hr className="mt-4 h-[2px] border-0 bg-[#cac4d0]" />;
}

function Heading({ children }) {
  return <legend className="pt-[18px] pb-0.5 text-[30px] leading-10 font-semibold">{children}</legend>;
}

function RadioRow({ name, label, value, onChange }) {
  return (
    <label className="flex h-[121px] items-center gap-[55px] pl-[55px] text-[34px]">
      <input
        type="radio"
        name={name}
        checked={value === label}
        onChange={() => onChange(label)}
        className="h-[39px] w-9 appearance-none rounded-[50%] border-4 border-[#49454f] checked:border-[#6750a4] checked:bg-[#6750a4] checked:shadow-[inset_0_0_0_5px_#f7f2fa]"
      />
      {label}
    </label>
  );
}

function Sheet() {
  const [notify, setNotify] = useState(true);
  const [distance, setDistance] = useState("2 km");
  const [type, setType] = useState("Tutto");

  return (
    <form
      role="dialog"
      aria-label="Impostazioni parcheggi"
      onSubmit={(e) => e.preventDefault()}
      className="absolute inset-0 mx-auto flex w-full max-w-[1284px] flex-col rounded-t-[36px] bg-[#f7f2fa] px-8 pt-5 pb-4 text-[#1d1b20]"
    >
      <div className="flex flex-col items-center gap-[11px]">
        <div className="flex h-3 items-center gap-[5px]">
          <span className="size-[11px] rounded-full bg-[#95919a]" />
          <span className="size-[11px] rounded-full bg-[#95919a]" />
          <span className="size-[11px] rounded-full bg-[#95919a]" />
        </div>
        <span className="h-[9px] w-[84px] rounded-full bg-[#bababb]" />
      </div>

      <label className="mt-[27px] flex h-[121px] items-center justify-between pr-[57px] pl-[34px] text-[34px]">
        Notifiche parcheggi
        <input
          type="checkbox"
          role="switch"
          checked={notify}
          onChange={(e) => setNotify(e.target.checked)}
          className="flex h-[70px] w-[104px] appearance-none items-center rounded-full bg-[#cac4d0] px-[7px] before:block before:h-[53px] before:w-[49px] before:rounded-[50%] before:bg-white checked:justify-end checked:bg-[#6750a4]"
        />
      </label>
      <Divider />

      <fieldset>
        <Heading>Distanza ricerca parcheggi</Heading>
        {DISTANCES.map((d) => (
          <RadioRow key={d} name="distanza" label={d} value={distance} onChange={setDistance} />
        ))}
      </fieldset>
      <Divider />

      <fieldset>
        <Heading>Tipologia parcheggi</Heading>
        {TYPES.map((group, i) => (
          <React.Fragment key={group[0]}>
            {i > 0 && (
              <div className="pb-[17px]">
                <Divider />
              </div>
            )}
            {group.map((t) => (
              <RadioRow key={t} name="tipologia" label={t} value={type} onChange={setType} />
            ))}
          </React.Fragment>
        ))}
      </fieldset>

      <button
        type="submit"
        className="mx-auto mt-2.5 flex h-[87px] items-center gap-4 rounded-full bg-[#f7f2fa] pr-12 pl-8 text-[29px] font-medium text-[#6750a4] shadow-[0_2px_5px_1px_rgba(0,0,0,0.25)]"
      >
        <MdCheck className="h-[38px] w-9" preserveAspectRatio="none" />
        Salva
      </button>

      <div className="mx-auto mt-auto h-[13px] w-[692px] rounded-full bg-black" />
    </form>
  );
}

export default function App() {
  return (
    <main className="relative flex h-screen w-full flex-col overflow-hidden font-['Inter',sans-serif]">
      <section className="relative flex-1 overflow-hidden">
        <CityMap />
        <MapControls />
      </section>
      <BottomNav />
      <div className="absolute inset-0 bg-black/54" />
      <StatusBar />
      <Sheet />
    </main>
  );
}
